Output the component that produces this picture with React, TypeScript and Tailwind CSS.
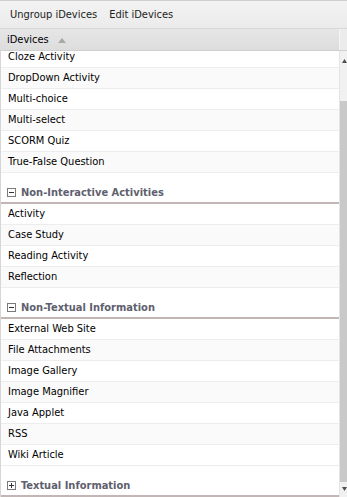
import React from 'react';

type Group = { title: string; open: boolean; items: string[] };

const groups: Group[] = [
  {
    title: '',
    open: true,
    items: ['Cloze Activity', 'DropDown Activity', 'Multi-choice', 'Multi-select', 'SCORM Quiz', 'True-False Question'],
  },
  {
    title: 'Non-Interactive Activities',
    open: true,
    items: ['Activity', 'Case Study', 'Reading Activity', 'Reflection'],
  },
  {
    title: 'Non-Textual Information',
    open: true,
    items: ['External Web Site', 'File Attachments', 'Image Gallery', 'Image Magnifier', 'Java Applet', 'RSS', 'Wiki Article'],
  },
  { title: 'Textual Information', open: false, items: [] },
];

const font = { fontFamily: '"DejaVu Sans Condensed", "Liberation Sans", Arial, sans-serif' };

function Toggle({ open }: { open: boolean }) {
  return (
    <svg width="9" height="9" viewBox="0 0 9 9" className="shrink-0">
      <rect x="0.5" y="0.5" width="8" height="8" fill="#fff" stroke="#7a7a7a" />
      <line x1="2" y1="4.5" x2="7" y2="4.5" stroke="#333" />
      {!open && <line x1="4.5" y1="2" x2="4.5" y2="7" stroke="#333" />}
    </svg>
  );
}

function GroupHeader({ title, open }: { title: string; open: boolean }) {
  return (
    <div className="h-[31px] shrink-0 bg-white border-b-2 border-[#c2b6b6] flex items-end pb-[5px] pl-[6px] gap-[5px]">
      <Toggle open={open} />
      <span className="text-[11px] font-bold text-[#5e606e] leading-[14px] -mb-[3px]">{title}</span>
    </div>
  );
}

function Row({ label, alt }: { label: string; alt: boolean }) {
  return (
    <div
      className={`h-[21px] shrink-0 border-b border-[#ededed] flex items-center pl-[7px] pt-[1px] text-[11px] text-black ${
        alt ? 'bg-[#fafafa]' : 'bg-white'
      }`}
    >
      {label}
    </div>
  );
}

export default function App() {
  return (
    <div className="w-[347px] h-[497px] overflow-hidden flex flex-col bg-white" style={font}>
      <div className="h-[29px] shrink-0 border-t border-[#d0d0d0] border-b border-b-[#d8d8d8] bg-gradient-to-b from-[#f3f3f3] to-[#ebebeb] flex items-center gap-[12px] pl-[10px] pt-[1px] text-[11px] text-[#222]">
        <span>Ungroup iDevices</span>
        <span>Edit iDevices</span>
      </div>
      <div className="h-[22px] shrink-0 flex border-b border-[#d0d0d0]">
        <div className="w-[340px] bg-gradient-to-b from-[#e6e6e6] to-[#dddddd] border-r border-[#f4f4f4] flex items-center pl-[7px] pt-[2px] gap-[9px] text-[11px] text-black">
          <span>iDevices</span>
          <svg width="8" height="5" viewBox="0 0 8 5">
            <path d="M0 5 L4 0 L8 5 Z" fill="#a8a8a8" />
          </svg>
        </div>
        <div className="flex-1 bg-[#ececec]" />
      </div>
      <div className="flex-1 flex min-h-0 border-l border-[#d6d6d6]">
        <div className="w-[340px] overflow-hidden flex flex-col">
          <div className="-mt-[4px] flex flex-col">
            {groups.map((g, gi) => (
              <React.Fragment key={gi}>
                {g.title && <GroupHeader title={g.title} open={g.open} />}
                {g.items.map((it, i) => (
                  <Row key={it} label={it} alt={i % 2 === 1} />
                ))}
              </React.Fragment>
            ))}
          </div>
        </div>
        <div className="flex-1 flex flex-col bg-[#f1f1f1] border-l border-[#e4e4e4]">
          <div className="h-[50px] shrink-0 pt-[8px] pl-[2px]">
            <svg width="5" height="4" viewBox="0 0 5 4">
              <path d="M0 4 L2.5 0 L5 4 Z" fill="#505050" />
            </svg>
          </div>
          <div className="flex-1 bg-[#c9c9c9]" />
          <div className="h-[15px] shrink-0 pt-[5px] pl-[2px]">
            <svg width="5" height="4" viewBox="0 0 5 4">
              <path d="M0 0 L2.5 4 L5 0 Z" fill="#505050" />
            </svg>
          </div>
        </div>
      </div>
    </div>
  );
}
